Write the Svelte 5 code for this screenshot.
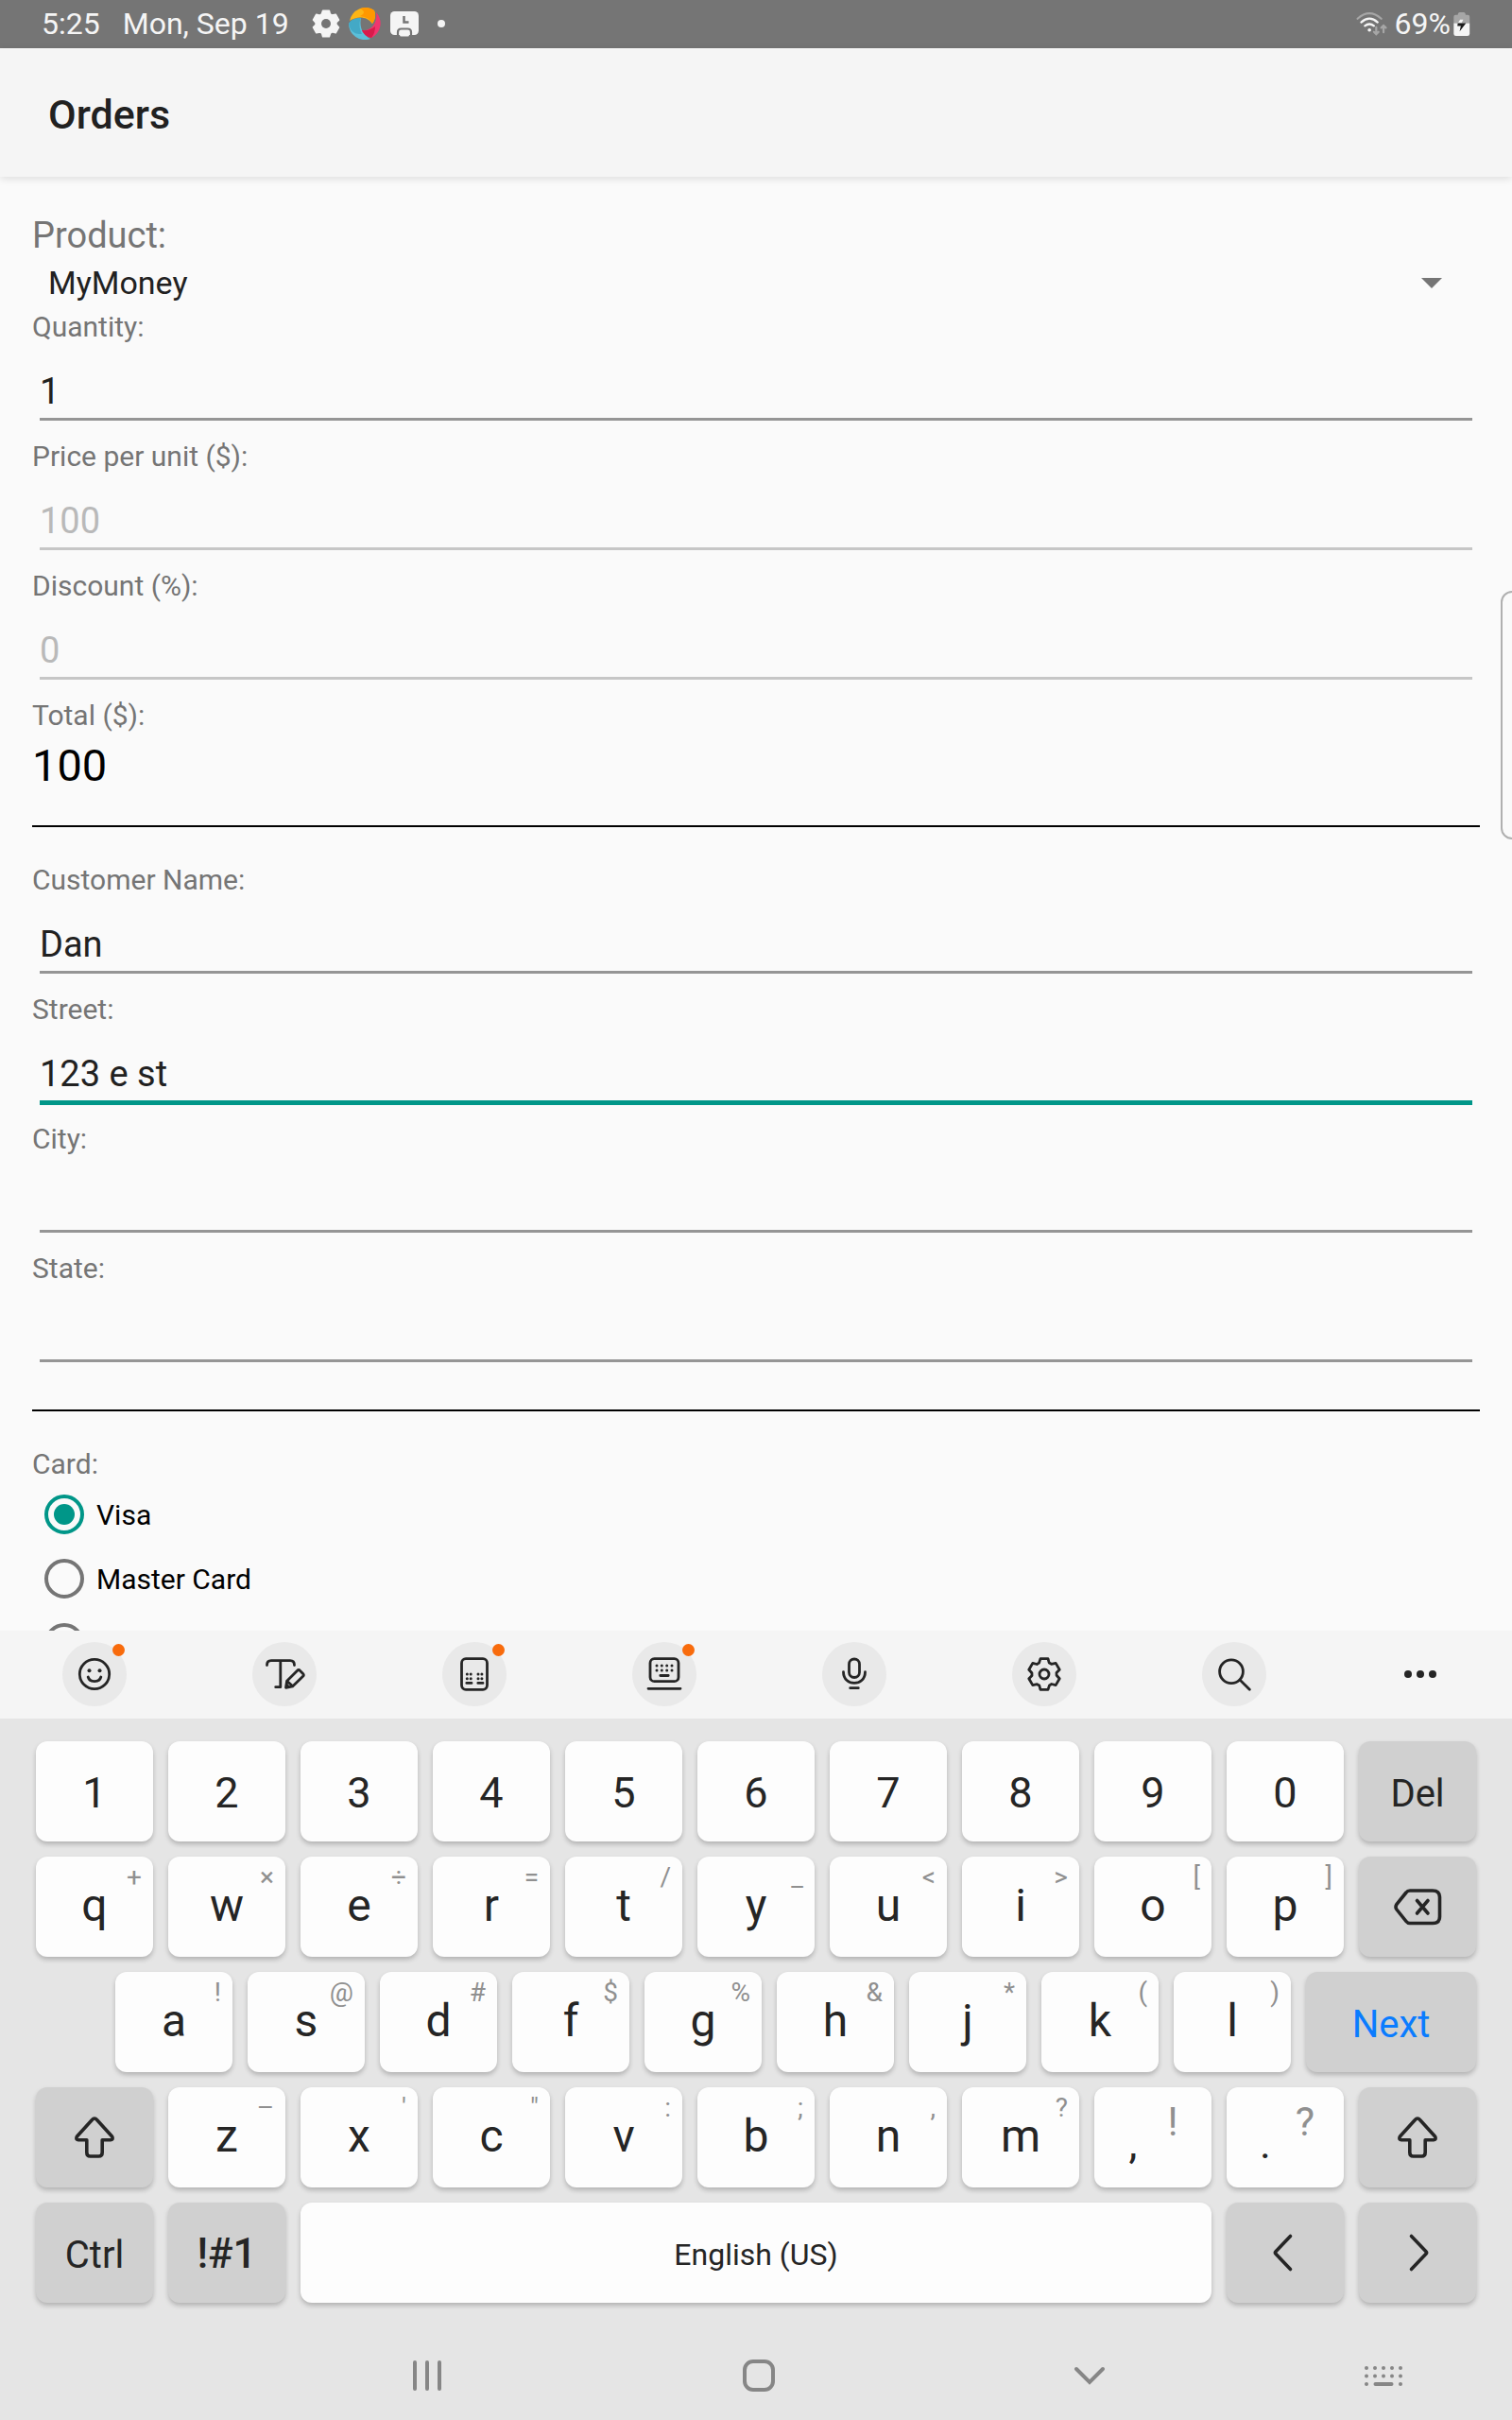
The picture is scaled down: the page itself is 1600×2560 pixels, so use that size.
<script>
  let product = $state('MyMoney');
  let card = $state('visa');

  const orderFields = [
    { id: 'quantity', label: 'Quantity:', value: '1' },
    { id: 'price', label: 'Price per unit ($):', value: '100', disabled: true },
    { id: 'discount', label: 'Discount (%):', value: '0', disabled: true },
  ];
  const customerFields = [
    { id: 'name', label: 'Customer Name:', value: 'Dan' },
    { id: 'street', label: 'Street:', value: '123 e st', active: true },
    { id: 'city', label: 'City:', value: '' },
    { id: 'state', label: 'State:', value: '' },
  ];

  const letters = (chars, hints) =>
    [...chars].map((text, i) => ({ text, hint: hints[i], kind: 'letter' }));

  const rows = [
    [...[...'1234567890'].map((text) => ({ text, kind: 'digit' })), { text: 'Del', kind: 'fn' }],
    [...letters('qwertyuiop', '+×÷=/_<>[]'), { icon: 'backspace', name: 'Backspace', kind: 'fn' }],
    [{ spacer: true }, ...letters('asdfghjkl', '!@#$%&*()'), { text: 'Next', kind: 'fn next' }],
    [
      { icon: 'shift', name: 'Shift', kind: 'fn' },
      ...letters('zxcvbnm', '–\'":;,?'),
      { text: ',', hint: '!', kind: 'pair' },
      { text: '.', hint: '?', kind: 'pair' },
      { icon: 'shift', name: 'Right shift', kind: 'fn' },
    ],
    [
      { text: 'Ctrl', kind: 'fn' },
      { text: '!#1', kind: 'fn symbols' },
      { text: 'English (US)', kind: 'space' },
      { icon: 'left', name: 'Cursor left', kind: 'fn' },
      { icon: 'right', name: 'Cursor right', kind: 'fn' },
    ],
  ];

  const tools = [
    { icon: 'emoji', name: 'Emoji', badge: true },
    { icon: 'write', name: 'Text editing' },
    { icon: 'calc', name: 'Keyboard size', badge: true },
    { icon: 'modes', name: 'Modes', badge: true },
    { icon: 'mic', name: 'Voice input' },
    { icon: 'gear', name: 'Settings' },
    { icon: 'search', name: 'Search' },
  ];

  // Six-toothed cog: one tooth and valley, repeated every 60 degrees.
  const tooth = [[-4, -16.4], [4, -16.4], [5.2, -12], [7.6, -10.7]];
  const cog = 'M' + Array.from({ length: 6 }, (_, k) => {
    const a = (k * Math.PI) / 3;
    return tooth
      .map(([x, y]) => `${(x * Math.cos(a) - y * Math.sin(a)).toFixed(2)} ${(x * Math.sin(a) + y * Math.cos(a)).toFixed(2)}`)
      .join('L');
  }).join('L') + 'Z';
</script>

{#snippet glyph(name)}
  <svg class="glyph" viewBox="-26 -26 52 52" aria-hidden="true">
    {#if name === 'emoji'}
      <circle r="15.7" />
      <circle class="solid" cx="-5.5" cy="-3.7" r="2" /><circle class="solid" cx="5.5" cy="-3.7" r="2" />
      <path d="M-6.8 3C-5 9.200 5 9.200 6.800 3" />
    {:else if name === 'write'}
      <path d="M-18.500 -9.500C-18.500 -13-17 -14.300-14 -14.300H6C9 -14.300 10.500 -13 10.500 -9.500M-4.200 -14.300V13.700H-9.300" />
      <path d="M1.500 14.300L2.600 7.200L13.400 -3.600Q15 -5.200 16.600 -3.600L19.600 -.600Q21 .900 19.600 2.300L8.800 12.800ZM2.600 7.200L8.800 12.800" />
      <path class="solid" d="M1.500 14.300L2.300 9.300L6 13Z" />
    {:else if name === 'calc'}
      <rect x="-13.500" y="-16.300" width="27" height="32.600" rx="4.500" />
      {#each [0, 4.7] as y}{#each [-7.7, -3.8, 4, 7.900] as x}<circle class="solid" cx={x} cy={y} r="1.500" />{/each}{/each}
      <path d="M-8.200 9.400H-3M3.800 9.400H9" />
    {:else if name === 'modes'}
      <rect x="-15" y="-16.300" width="30" height="24" rx="4.500" />
      {#each [-9, -4] as y}{#each [-8, -2.700, 2.700, 8] as x}<circle class="solid" cx={x} cy={y} r="1.500" />{/each}{/each}
      <path d="M-4.200 1.500H4.200M-17 15.300H17" />
    {:else if name === 'mic'}
      <rect x="-5.500" y="-16" width="11" height="19.500" rx="5.500" />
      <path d="M-11.500 -2.300C-11.500 13.200 11.500 13.200 11.500 -2.300M-4.300 14.700H4.300" />
    {:else if name === 'gear'}
      <path d={cog} /><circle r="5" />
    {:else if name === 'search'}
      <circle cx="-3" cy="-2.700" r="12.400" /><path d="M6.500 6.500L16.300 16.300" />
    {:else if name === 'backspace'}
      <path class="bold" d="M-8 -17H16Q23.500 -17 23.500 -10V10.500Q23.500 17.500 16 17.500H-8Q-10.500 17.500 -12 15.500L-22 3Q-24 .2-22 -2.600L-12 -15Q-10.500 -17-8 -17Z" />
      <path class="bold" d="M-.500 -6.500L11 7M11 -6.500L-.500 7" />
    {:else if name === 'shift'}
      <path class="bold" d="M-2.600 -18.500Q0 -21.500 2.600 -18.500L18.500 -1Q20.500 2.300 17 2.800H8.200V16Q8.200 20 4.500 20H-4.500Q-8.200 20-8.200 16V2.800H-17Q-20.500 2.300-18.500 -1Z" />
    {:else if name === 'left'}
      <path class="bold" d="M5.500 -17.500L-10 -1.300Q-11.200 0-10 1.300L5.500 17.500" />
    {:else if name === 'right'}
      <path class="bold" d="M-6.500 -17.500L9 -1.300Q10.200 0 9 1.300L-6.500 17.500" />
    {/if}
  </svg>
{/snippet}

{#snippet field(f)}
  <div class="field">
    <label for={f.id}>{f.label}</label>
    <input id={f.id} type="text" class:active={f.active} value={f.value} disabled={f.disabled} autocomplete="off" />
  </div>
{/snippet}

<div class="screen">
  <header class="status">
    <span class="time">5:25</span>
    <span class="date">Mon, Sep 19</span>
    <div class="notices">
      <svg width="30" height="32" viewBox="-18 -19 36 38" aria-hidden="true">
        <path d={cog} fill="#f5f5f5" stroke="#f5f5f5" stroke-width="2" stroke-linejoin="round" /><circle r="6" fill="#757575" />
      </svg>
      <svg width="34" height="34" viewBox="0 0 34 34" aria-hidden="true">
        <path d="M0 17A17 17 0 0 0 23 33C15 29 11 21 13 11C6 12 2 14 0 17Z" fill="#5bbfd9" />
        <path d="M0 17C3 12 7 11 13 11C10 17 12 24 14 28C5 29 1 23 0 17Z" fill="#43a9c6" />
        <path d="M1 14A17 17 0 0 1 27 3C29 8 28 13 25 17C19 9 9 9 1 14Z" fill="#fdb515" />
        <path d="M12 1Q20-2 27 3C29 8 28 13 25 17Q22 10 12 9Q20 5 12 1Z" fill="#ff9800" />
        <path d="M29 5A17 17 0 0 1 24 32C19 31 16 28 14 24C23 25 31 17 29 5Z" fill="#f0356f" />
        <path d="M14 24Q22 25 28 20Q28 27 24 32C19 31 16 28 14 24Z" fill="#d81b4a" />
      </svg>
      <svg width="32" height="28" viewBox="0 0 32 28" aria-hidden="true">
        <rect x="1" y="1" width="30" height="25" rx="4.500" fill="#f5f5f5" />
        <path d="M15.500 6V12.500H20.500" fill="none" stroke="#757575" stroke-width="2.500" />
        <path d="M9 26V23Q9 19.500 12.500 19.500H19.500Q23 19.500 23 23V26" fill="#f5f5f5" stroke="#757575" stroke-width="2.200" />
        <rect x="11" y="22" width="10" height="5.500" rx="1.500" fill="#f5f5f5" />
      </svg>
      <i class="more"></i>
    </div>
    <div class="system">
      <svg width="36" height="28" viewBox="0 0 36 28" fill="none" stroke-width="2.300" stroke-linecap="round" aria-hidden="true">
        <path d="M2 8Q15-3.500 28 8" stroke="#a6a6a6" />
        <path d="M6 12Q15 4 24 12M10 16Q15 12 20 16" stroke="#f5f5f5" />
        <circle cx="15" cy="20.500" r="1.900" fill="#f5f5f5" />
        <path d="M22.500 17.500V24.500M20 22.500L22.500 25L25 22.500M30.500 23V16M28 18L30.500 15.500L33 18" stroke="#a6a6a6" />
      </svg>
      <span class="level">69%</span>
      <svg width="18" height="28" viewBox="0 0 18 28" aria-hidden="true">
        <path d="M0 13V6Q0 4 2 4H4.500V3Q5 1 6.500 1H11Q12.500 1 13 3V4H15.500Q17.500 4 17.500 6V13Z" fill="#a6a6a6" />
        <path d="M0 13H17.500V24.500Q17.500 27 15 27H2.500Q0 27 0 24.500Z" fill="#f5f5f5" />
        <path d="M7 9H10.500L8.500 13H4.500Z" fill="#f5f5f5" /><path d="M4.500 13H13.500L6.500 22L7.800 16H4Z" fill="#1c1c1c" />
      </svg>
    </div>
  </header>

  <div class="appbar"><h1>Orders</h1></div>

  <main>
    <form>
      <label class="large" for="product">Product:</label>
      <div class="picker">
        <select id="product" bind:value={product}><option>MyMoney</option></select>
        <svg width="22" height="11" viewBox="0 0 22 11" aria-hidden="true"><path d="M0 0H22L11 11Z" fill="#757575" /></svg>
      </div>
      {#each orderFields as f}{@render field(f)}{/each}
      <label for="total">Total ($):</label>
      <output id="total">100</output>
      <hr />
      {#each customerFields as f}{@render field(f)}{/each}
      <hr class="second" />
      <fieldset>
        <legend>Card:</legend>
        <label class="option"><input type="radio" name="card" value="visa" bind:group={card} />Visa</label>
        <label class="option"><input type="radio" name="card" value="master" bind:group={card} />Master Card</label>
        <div class="option"><input type="radio" name="card" value="other" bind:group={card} aria-label="Other card" /></div>
      </fieldset>
    </form>
  </main>
  <div class="edge"></div>

  <section class="keyboard" aria-label="Keyboard">
    <div class="tools">
      {#each tools as tool}
        <button class="tool" aria-label={tool.name}>
          {@render glyph(tool.icon)}
          {#if tool.badge}<i class="badge"></i>{/if}
        </button>
      {/each}
      <button class="overflow" aria-label="More"><i></i><i></i><i></i></button>
    </div>

    <div class="keys">
      {#each rows as row}
        <div class="row">
          {#each row as key}
            {#if key.spacer}
              <span class="spacer"></span>
            {:else}
              <button class="key {key.kind}" aria-label={key.name}>
                {#if key.icon}{@render glyph(key.icon)}{:else}<span class="main">{key.text}</span>{/if}
                {#if key.hint}<span class="hint">{key.hint}</span>{/if}
              </button>
            {/if}
          {/each}
        </div>
      {/each}
    </div>

    <nav>
      <span></span>
      <button aria-label="Recents">
        <svg width="34" height="36" viewBox="0 0 34 36"><path d="M4 4V32M17 4V32M30 4V32" /></svg>
      </button>
      <button aria-label="Home">
        <svg width="36" height="36" viewBox="0 0 36 36"><rect x="3" y="3" width="30" height="30" rx="9" /></svg>
      </button>
      <button aria-label="Back">
        <svg width="36" height="36" viewBox="0 0 36 36"><path d="M4 11L18 25L32 11" /></svg>
      </button>
      <button aria-label="Switch keyboard">
        <svg width="42" height="28" viewBox="0 0 42 28">
          {#each [6, 14.5] as y}{#each [3, 12, 21, 30, 39] as x}<circle cx={x} cy={y} r="2" />{/each}{/each}
          <circle cx="3" cy="23" r="2" /><circle cx="39" cy="23" r="2" /><path d="M12.500 23H29.500" />
        </svg>
      </button>
    </nav>
  </section>
</div>

<style>
  :global(body) { margin: 0; }
  * { box-sizing: border-box; }
  button, input, select { font: inherit; color: inherit; }
  button { border: 0; padding: 0; background: none; cursor: pointer; }

  .screen {
    position: relative;
    display: flex;
    flex-direction: column;
    height: 100vh;
    overflow: hidden;
    background: #fafafa;
    color: #212121;
    font-family: Roboto, "Liberation Sans", sans-serif;
  }

  .status {
    display: flex;
    align-items: center;
    flex: none;
    height: 51px;
    padding: 0 44px 2px 44px;
    background: #757575;
    color: #f5f5f5;
    font-size: 32px;
    line-height: 40px;
  }
  .date { margin-left: 24px; }
  .notices { display: flex; align-items: center; gap: 9px; margin-left: 24px; }
  .notices, .system svg { padding-top: 1px; }
  .more { width: 8px; height: 8px; margin-left: 10px; border-radius: 50%; background: #f5f5f5; }
  .system { display: flex; align-items: center; gap: 3px; margin-left: auto; }
  .level { margin-left: 3px; }

  .appbar {
    position: relative;
    z-index: 1;
    display: flex;
    align-items: center;
    flex: none;
    height: 136px;
    padding: 4px 51px 0;
    background: #f5f5f5;
    box-shadow: 0 2px 8px rgba(0, 0, 0, 0.12);
  }
  h1 { margin: 0; font-size: 43px; line-height: 50px; font-weight: 500; }

  main { flex: 1; min-height: 0; overflow: hidden; }
  form { padding: 40px 34px 0; }
  label, legend { display: block; padding: 0; color: #757575; font-size: 30px; line-height: 35px; }
  .large { font-size: 38px; line-height: 45px; }
  .picker { display: flex; align-items: center; height: 56px; padding-bottom: 2px; }
  .picker svg { flex: none; margin: 0 40px 0 -62px; pointer-events: none; }
  select {
    flex: 1;
    height: 54px;
    padding: 0 17px;
    border: 0;
    appearance: none;
    background: none;
    font-size: 34px;
    line-height: 40px;
    outline: none;
  }
  .field { display: flex; flex-direction: column; height: 137px; }
  .field input {
    height: 82px;
    margin: 0 8px;
    padding: 28px 0 6px;
    border: 0;
    border-bottom: 3px solid #959595;
    border-radius: 0;
    outline: none;
    background: none;
    font-size: 38px;
    line-height: 45px;
  }
  .field input:disabled { color: #b9b9b9; border-color: #c6c6c6; }
  .field input.active { height: 84px; border-bottom: 5px solid #009688; }
  output { display: block; margin-top: 8px; color: #000; font-size: 47px; line-height: 55px; }
  hr { height: 2px; margin: 36px 0 38px; border: 0; background: #000; }
  .second { margin-top: 30px; }
  fieldset { margin: 0; padding: 0; border: 0; }
  legend { margin-bottom: 2px; }
  .option { display: flex; align-items: center; gap: 13px; height: 68px; padding-left: 13px; color: #000; }
  .option input {
    appearance: none;
    display: grid;
    place-items: center;
    width: 42px;
    height: 42px;
    margin: 0;
    border: 4px solid #757575;
    border-radius: 50%;
  }
  .option input:checked { border-color: #009688; }
  .option input:checked::before { content: ""; width: 22px; height: 22px; border-radius: 50%; background: #009688; }

  .edge {
    position: absolute;
    top: 625px;
    right: -12px;
    width: 24px;
    height: 263px;
    border: 2px solid #b0b0b0;
    border-radius: 12px;
    background: #fafafa;
  }

  .keyboard { flex: none; background: #e5e5e5; color: #252525; }
  .tools {
    display: flex;
    align-items: center;
    justify-content: space-between;
    height: 93px;
    padding: 0 67px 1px 66px;
    background: #f5f5f5;
  }
  .tool { position: relative; display: grid; place-items: center; width: 68px; height: 68px; border-radius: 50%; background: #e9e9e9; }
  .badge { position: absolute; top: 2px; right: 2px; width: 13px; height: 13px; border-radius: 50%; background: #f86b0c; }
  .overflow { display: flex; align-items: center; justify-content: center; gap: 5px; width: 60px; height: 68px; }
  .overflow i { width: 8px; height: 8px; border-radius: 50%; background: #252525; }

  .glyph { width: 52px; height: 52px; fill: none; stroke: #252525; stroke-width: 2.8; stroke-linecap: round; stroke-linejoin: round; }
  .glyph .solid { fill: #252525; stroke: none; }
  .glyph .bold { stroke-width: 3.6; }

  .keys { display: flex; flex-direction: column; gap: 16px; padding: 24px 38px 28px; }
  .row { display: flex; gap: 16px; }
  .spacer { flex: 68 1 0; }
  .key {
    position: relative;
    display: flex;
    align-items: center;
    justify-content: center;
    flex: 124 1 0;
    min-width: 0;
    height: 106px;
    border-radius: 12px;
    background: #fdfdfd;
    box-shadow: 0 3px 5px rgba(0, 0, 0, 0.22);
    font-size: 45px;
    line-height: 56px;
  }
  .letter { padding-bottom: 2px; font-size: 48px; }
  .digit { padding-top: 3px; }
  .fn { background: #d0d0d0; font-size: 40px; }
  .fn > .main { padding-top: 5px; }
  .key.symbols { font-size: 44px; font-weight: 500; }
  .symbols > .main { padding-top: 2px; }
  .next { flex-grow: 180; color: #0a7cff; }
  .space { flex-grow: 964; padding-top: 4px; font-size: 32px; }
  .hint { position: absolute; top: 6px; right: 12px; color: #909090; font-size: 28px; line-height: 32px; }
  .pair { display: grid; grid-template-columns: 20px 1fr 1fr 20px; justify-items: center; padding: 8px 0 0; }
  .pair .main { grid-column: 2; }
  .pair .hint { position: static; grid-column: 3; margin-bottom: 48px; font-size: 43px; line-height: 56px; }

  nav { display: grid; grid-template-columns: 277fr 350fr 351fr 349fr 273fr; height: 96px; padding-top: 1px; }
  nav button { display: grid; place-items: center; }
  nav svg { fill: none; stroke: #868686; stroke-width: 4; stroke-linecap: round; }
  nav circle { fill: #868686; stroke: none; }
</style>
